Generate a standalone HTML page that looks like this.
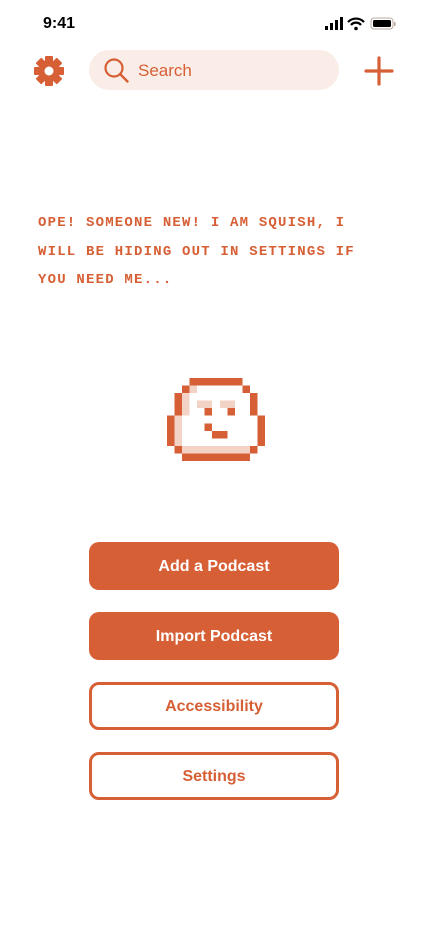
<!DOCTYPE html>
<html><head><meta charset="utf-8"><style>
body{margin:0;width:428px;height:926px;background:#fff;position:relative;font-family:"Liberation Sans",sans-serif;overflow:hidden}
.abs{position:absolute}
.txt{left:38px;top:209px;color:#D65F35;font-family:"Liberation Mono",monospace;font-weight:bold;font-size:14px;letter-spacing:1.2px;line-height:28.5px;white-space:pre}
.btn{position:absolute;left:89px;width:250px;height:48px;border-radius:10px;box-sizing:border-box;display:flex;align-items:center;justify-content:center;font-weight:bold;font-size:16px;padding-top:2px}
.f{background:#D65F35;color:#fff}
.o{border:3px solid #D65F35;color:#D65F35;background:#fff}
</style></head><body>
<div class="abs" style="left:43px;top:15px;font-size:16px;font-weight:bold;color:#000">9:41</div>
<svg class="abs" style="left:324px;top:17px" width="72" height="14" viewBox="0 0 72 14">
<rect x="1" y="9" width="3" height="4" fill="#000"/><rect x="6" y="6" width="3" height="7" fill="#000"/><rect x="11" y="3" width="3" height="10" fill="#000"/><rect x="16" y="0" width="3" height="13" fill="#000"/>
<path d="M24 5 A11 11 0 0 1 40 5" stroke="#000" stroke-width="2.2" fill="none"/><path d="M27 8 A6.5 6.5 0 0 1 37 8" stroke="#000" stroke-width="2.2" fill="none"/><circle cx="32" cy="11.5" r="1.8" fill="#000"/>
<rect x="47" y="1" width="22" height="11" rx="3" fill="none" stroke="#b9a8a0" stroke-width="1"/><rect x="49" y="3" width="18" height="7" rx="1.5" fill="#000"/><rect x="70" y="5" width="1.5" height="4" fill="#b9a8a0"/>
</svg>
<svg class="abs" style="left:33px;top:55px" width="32" height="32" viewBox="0 0 32 32">
<g fill="#D65F35" transform="translate(16 16)">
<circle r="11"/>
<rect x="-4" y="-15" width="8" height="30" rx="1"/>
<rect x="-4" y="-15" width="8" height="30" rx="1" transform="rotate(45)"/>
<rect x="-4" y="-15" width="8" height="30" rx="1" transform="rotate(90)"/>
<rect x="-4" y="-15" width="8" height="30" rx="1" transform="rotate(135)"/>
<circle r="4.5" fill="#fff"/></g></svg>
<div class="abs" style="left:89px;top:50px;width:250px;height:40px;border-radius:20px;background:#FAEDE8"></div>
<svg class="abs" style="left:103px;top:57px" width="28" height="28" viewBox="0 0 28 28"><circle cx="11" cy="11" r="8.5" stroke="#D65F35" stroke-width="2.2" fill="none"/><path d="M17.5 17.5L24.5 24.5" stroke="#D65F35" stroke-width="2.4" stroke-linecap="round"/></svg>
<div class="abs" style="left:138px;top:61px;font-size:17px;color:#D65F35">Search</div>
<svg class="abs" style="left:364px;top:56px" width="30" height="30"><path d="M15 2V28M2 15H28" stroke="#D65F35" stroke-width="3.2" stroke-linecap="round"/></svg>
<div class="abs txt">OPE! SOMEONE NEW! I AM SQUISH, I
WILL BE HIDING OUT IN SETTINGS IF
YOU NEED ME...</div>
<svg class="abs" style="left:167px;top:378px" width="98" height="83" viewBox="0 0 13 11" shape-rendering="crispEdges">
<g fill="#F3D3C6">
<rect x="3" y="1" width="1" height="1"/><rect x="2" y="2" width="1" height="3"/><rect x="1" y="5" width="1" height="4"/><rect x="2" y="9" width="9" height="1"/>
<rect x="4" y="3" width="2" height="1"/><rect x="7" y="3" width="2" height="1"/></g>
<g fill="#D65F35">
<rect x="3" y="0" width="7" height="1"/><rect x="2" y="1" width="1" height="1"/><rect x="10" y="1" width="1" height="1"/>
<rect x="1" y="2" width="1" height="3"/><rect x="11" y="2" width="1" height="3"/>
<rect x="0" y="5" width="1" height="4"/><rect x="12" y="5" width="1" height="4"/>
<rect x="1" y="9" width="1" height="1"/><rect x="11" y="9" width="1" height="1"/><rect x="2" y="10" width="9" height="1"/>
<rect x="5" y="4" width="1" height="1"/><rect x="8" y="4" width="1" height="1"/>
<rect x="5" y="6" width="1" height="1"/><rect x="6" y="7" width="2" height="1"/></g></svg>
<div class="btn f" style="top:542px">Add a Podcast</div>
<div class="btn f" style="top:612px">Import Podcast</div>
<div class="btn o" style="top:682px">Accessibility</div>
<div class="btn o" style="top:752px">Settings</div>
</body></html>
